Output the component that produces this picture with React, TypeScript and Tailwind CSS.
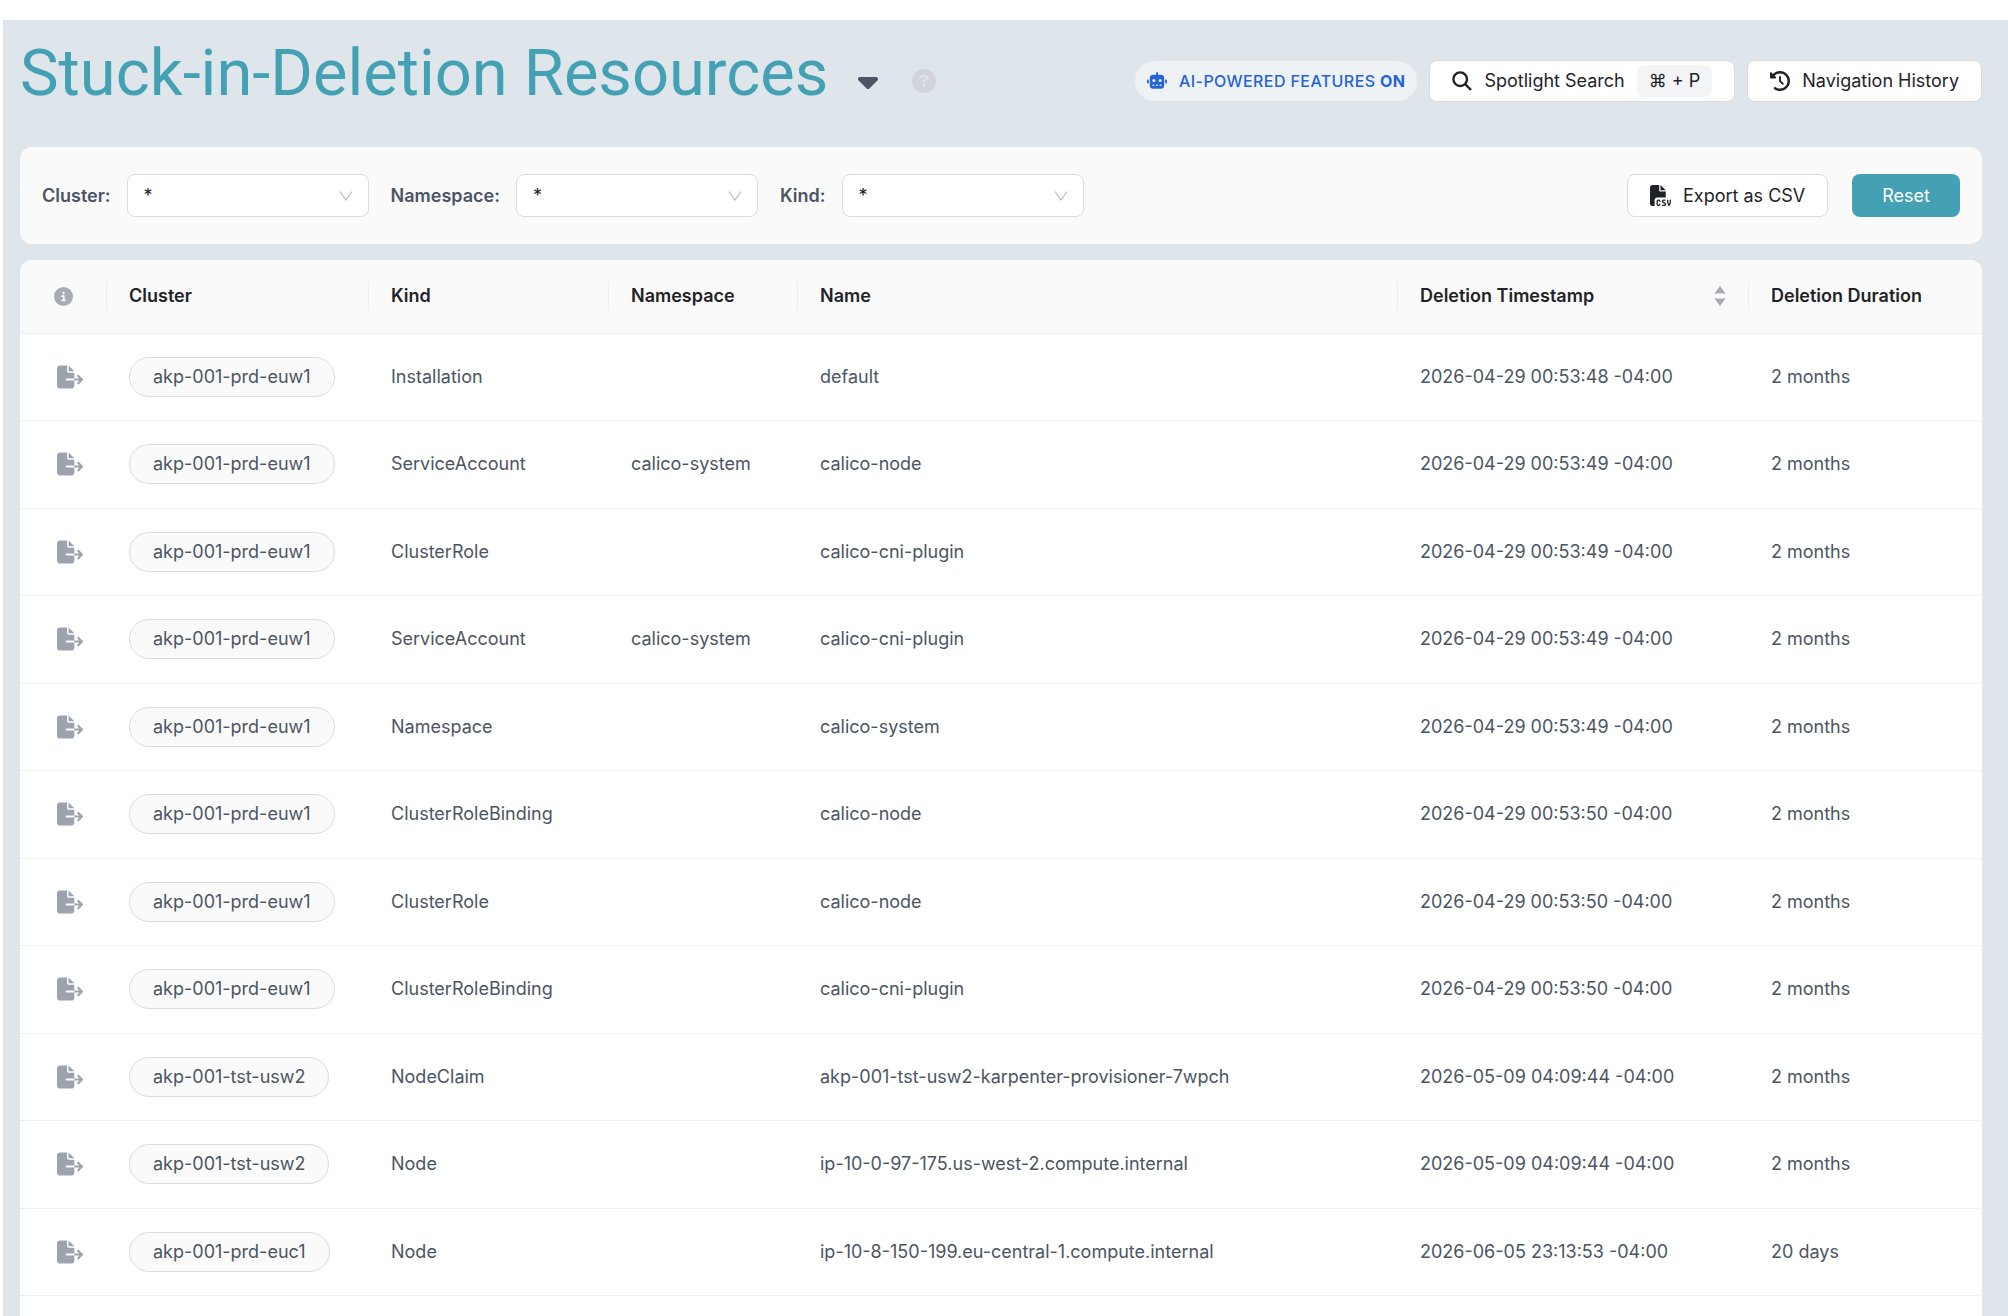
import React from "react";
import {
  FaCaretDown,
  FaCircleInfo,
  FaCircleQuestion,
  FaClockRotateLeft,
  FaFileCsv,
  FaFileExport,
} from "react-icons/fa6";

type Resource = {
  cluster: string;
  kind: string;
  namespace?: string;
  name: string;
  deletedAt: string;
  duration: string;
};

const resources: Resource[] = [
  { cluster: "akp-001-prd-euw1", kind: "Installation", name: "default", deletedAt: "2026-04-29 00:53:48 -04:00", duration: "2 months" },
  { cluster: "akp-001-prd-euw1", kind: "ServiceAccount", namespace: "calico-system", name: "calico-node", deletedAt: "2026-04-29 00:53:49 -04:00", duration: "2 months" },
  { cluster: "akp-001-prd-euw1", kind: "ClusterRole", name: "calico-cni-plugin", deletedAt: "2026-04-29 00:53:49 -04:00", duration: "2 months" },
  { cluster: "akp-001-prd-euw1", kind: "ServiceAccount", namespace: "calico-system", name: "calico-cni-plugin", deletedAt: "2026-04-29 00:53:49 -04:00", duration: "2 months" },
  { cluster: "akp-001-prd-euw1", kind: "Namespace", name: "calico-system", deletedAt: "2026-04-29 00:53:49 -04:00", duration: "2 months" },
  { cluster: "akp-001-prd-euw1", kind: "ClusterRoleBinding", name: "calico-node", deletedAt: "2026-04-29 00:53:50 -04:00", duration: "2 months" },
  { cluster: "akp-001-prd-euw1", kind: "ClusterRole", name: "calico-node", deletedAt: "2026-04-29 00:53:50 -04:00", duration: "2 months" },
  { cluster: "akp-001-prd-euw1", kind: "ClusterRoleBinding", name: "calico-cni-plugin", deletedAt: "2026-04-29 00:53:50 -04:00", duration: "2 months" },
  { cluster: "akp-001-tst-usw2", kind: "NodeClaim", name: "akp-001-tst-usw2-karpenter-provisioner-7wpch", deletedAt: "2026-05-09 04:09:44 -04:00", duration: "2 months" },
  { cluster: "akp-001-tst-usw2", kind: "Node", name: "ip-10-0-97-175.us-west-2.compute.internal", deletedAt: "2026-05-09 04:09:44 -04:00", duration: "2 months" },
  { cluster: "akp-001-prd-euc1", kind: "Node", name: "ip-10-8-150-199.eu-central-1.compute.internal", deletedAt: "2026-06-05 23:13:53 -04:00", duration: "20 days" },
];

function RobotIcon() {
  return (
    <svg viewBox="0 0 20 17" className="h-[17px] w-5" fill="currentColor">
      <rect x="9.1" y="0" width="1.8" height="4" rx=".9" />
      <rect x="0" y="7.500" width="1.8" height="4" rx=".8" />
      <rect x="18.2" y="7.500" width="1.8" height="4" rx=".8" />
      <rect x="2.8" y="2.8" width="14.4" height="14" rx="3.6" />
      <g fill="#eef2f5">
        <circle cx="6.900" cy="8.600" r="1.5" />
        <circle cx="13.100" cy="8.600" r="1.5" />
        <rect x="5.400" y="12.600" width="2" height="1.2" />
        <rect x="9" y="12.600" width="2" height="1.2" />
        <rect x="12.600" y="12.600" width="2" height="1.2" />
      </g>
    </svg>
  );
}

function SearchIcon() {
  return (
    <svg viewBox="0 0 20 20" className="mr-3 size-5" fill="none" stroke="currentColor" strokeWidth="2.4">
      <circle cx="8.200" cy="8.200" r="6.800" />
      <path d="M13 13l6 6" />
    </svg>
  );
}

function FilterSelect({ id, label }: { id: string; label: string }) {
  return (
    <div className="flex items-center gap-4">
      <label htmlFor={id} className="font-semibold text-[#4b5563]">
        {label}:
      </label>
      <div className="grid items-center">
        <select
          id={id}
          className="col-start-1 row-start-1 h-[43px] w-[242px] appearance-none rounded-lg border border-[#d9dcdf] bg-white px-4 text-[#1f2328]"
        >
          <option>*</option>
        </select>
        <svg viewBox="0 0 14 10" className="pointer-events-none col-start-1 row-start-1 mr-4 h-[10px] w-[14px] justify-self-end" fill="none" stroke="#b9bdc3">
          <path d="M1 .5 7 9l6-8.5" strokeWidth="1.3" />
        </svg>
      </div>
    </div>
  );
}

function HeaderCell({ children }: { children: React.ReactNode }) {
  return (
    <th scope="col" className="p-0 text-left font-semibold text-[#1f2328]">
      <div className="flex h-[30px] items-center justify-between border-r border-[#eeeff0] px-[22px]">{children}</div>
    </th>
  );
}

export default function App() {
  return (
    <div className="flex min-h-screen flex-col bg-white pt-5 pl-[3px] font-['Inter',sans-serif] text-lg text-[#4b5563]">
      <div className="flex flex-1 flex-col bg-[#dee5eb] pr-[26px] pl-[17px]">
        <header className="flex h-[127px] items-center justify-between pb-1.5">
          <div className="flex items-center">
            <h1 className="pb-4 font-['Roboto',sans-serif] text-[65px] leading-[76px] text-[#43a1b3]">Stuck-in-Deletion Resources</h1>
            <button aria-label="Switch page" className="ml-6 text-[#4b5563]">
              <FaCaretDown className="size-8" />
            </button>
            <button aria-label="Help" className="ml-7 text-[#d1d5db]">
              <FaCircleQuestion className="size-6" />
            </button>
          </div>
          <div className="flex items-center gap-3">
            <span className="flex h-10 items-center gap-3 rounded-full bg-[#eef2f5] px-3 text-base font-medium tracking-wide text-[#2563d9]">
              <RobotIcon />
              <span>
                AI-POWERED FEATURES <b className="font-bold">ON</b>
              </span>
            </span>
            <button className="flex h-[42px] items-center rounded-lg border border-[#d9dcdf] bg-white px-[22px] text-[#1f2328]">
              <SearchIcon />
              Spotlight Search
              <kbd className="ml-3 rounded-lg bg-[#f3f4f6] px-3 py-0.5 font-[inherit]">⌘ + P</kbd>
            </button>
            <button className="flex h-[42px] items-center gap-3 rounded-lg border border-[#d9dcdf] bg-white px-[22px] text-[#1f2328]">
              <FaClockRotateLeft className="size-5" />
              Navigation History
            </button>
          </div>
        </header>

        <section className="mb-4 flex h-[97px] items-center justify-between rounded-xl bg-[#fafafa] px-[22px]">
          <div className="flex items-center gap-[22px]">
            <FilterSelect id="cluster" label="Cluster" />
            <FilterSelect id="namespace" label="Namespace" />
            <FilterSelect id="kind" label="Kind" />
          </div>
          <div className="flex items-center gap-6">
            <button className="flex h-[43px] items-center gap-3 rounded-lg border border-[#d9dcdf] bg-white px-[22px] text-[#1f2328]">
              <FaFileCsv className="size-[21px]" />
              Export as CSV
            </button>
            <button className="h-[43px] rounded-lg bg-[#43a1b3] px-[30px] text-white">Reset</button>
          </div>
        </section>

        <div className="flex-1 overflow-hidden rounded-t-xl bg-white">
          <table className="w-full table-fixed border-collapse">
            <colgroup>
              <col className="w-[87px]" />
              <col className="w-[262px]" />
              <col className="w-[240px]" />
              <col className="w-[189px]" />
              <col />
              <col className="w-[351px]" />
              <col className="w-[233px]" />
            </colgroup>
            <thead>
              <tr className="h-[73px] border-b border-[#efefef] bg-[#fafafa]">
                <HeaderCell>
                  <FaCircleInfo className="ml-3 size-[19px] shrink-0 text-[#a9adb3]" />
                </HeaderCell>
                <HeaderCell>Cluster</HeaderCell>
                <HeaderCell>Kind</HeaderCell>
                <HeaderCell>Namespace</HeaderCell>
                <HeaderCell>Name</HeaderCell>
                <HeaderCell>
                  Deletion Timestamp
                  <button aria-label="Sort by deletion timestamp">
                    <svg viewBox="0 0 12 20" className="h-5 w-3" fill="#a9adb3">
                      <path d="M6 0l5.500 7.500h-11zM6 20l5.500-7.500h-11z" />
                    </svg>
                  </button>
                </HeaderCell>
                <th scope="col" className="px-[22px] text-left font-semibold text-[#1f2328]">
                  Deletion Duration
                </th>
              </tr>
            </thead>
            <tbody className="[&>tr]:border-b [&>tr]:border-[#efefef]">
              {resources.map((r, i) => (
                <tr key={i} className="odd:h-[87px] even:h-[88px]">
                  <td className="pl-[37px]">
                    <button aria-label="Open resource" className="block text-[#9ca3af]">
                      <FaFileExport className="size-[26px]" />
                    </button>
                  </td>
                  <td className="pl-[22px]">
                    <span className="inline-flex h-10 items-center rounded-full border border-[#d9dcdf] bg-[#fafafa] px-[23px]">{r.cluster}</span>
                  </td>
                  <td className="pl-[22px]">{r.kind}</td>
                  <td className="pl-[22px]">{r.namespace}</td>
                  <td className="pl-[22px]">{r.name}</td>
                  <td className="pl-[22px]">{r.deletedAt}</td>
                  <td className="pl-[22px]">{r.duration}</td>
                </tr>
              ))}
            </tbody>
          </table>
        </div>
      </div>
    </div>
  );
}
